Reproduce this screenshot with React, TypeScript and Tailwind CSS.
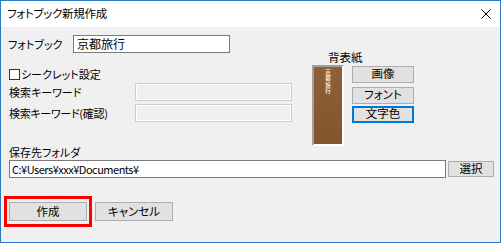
import React from 'react';

const jp = "[font-family:'Noto_Sans_CJK_JP','Noto_Sans',sans-serif] [font-feature-settings:'palt']";

function WinButton({ label, focused = false, className = '' }: { label: string; focused?: boolean; className?: string }) {
  return (
    <div
      className={`flex items-center justify-center bg-[#e1e1e1] border text-[11.5px] leading-none text-black ${
        focused ? 'border-[#0078d7] shadow-[inset_0_0_0_1px_#0078d7]' : 'border-[#adadad]'
      } ${className}`}
    >
      {label}
    </div>
  );
}

export default function App() {
  return (
    <div className={`w-[501px] h-[243px] border border-[#2b79c4] bg-[#f0f0f0] flex flex-col text-black ${jp}`}>
      {/* title bar */}
      <div className="h-[26px] bg-white flex items-center justify-between pl-[6px] pr-[9px]">
        <span className="text-[11.5px] leading-none tracking-[-0.3px]">フォトブック新規作成</span>
        <svg width="10" height="10" viewBox="0 0 10 10" fill="none">
          <path d="M0.5 0.5L9.5 9.5M9.5 0.5L0.5 9.5" stroke="#000" strokeWidth="1" />
        </svg>
      </div>

      {/* upper area */}
      <div className="h-[118px] flex">
        <div className="w-[291px] pl-[7px] pt-[8px] text-[11px] leading-none">
          <div className="flex items-center h-[18px]">
            <span className="w-[65px]">フォトブック</span>
            <div className="w-[157px] h-[18px] bg-white border border-[#7a7a7a] flex items-center pl-[3px] text-[12px]">
              京都旅行
            </div>
          </div>

          <div className="flex items-center h-[11px] mt-[16px]">
            <div className="w-[11px] h-[11px] ml-[1px] bg-white border border-[#333333]" />
            <span className="ml-[1px]">シークレット設定</span>
          </div>

          <div className="flex items-center h-[18px] mt-[3px]">
            <span className="w-[127px] pl-[1px]">検索キーワード</span>
            <div className="w-[157px] h-[18px] border border-[#cccccc] bg-[#f0f0f0] shadow-[inset_1px_1px_0_#ffffff,inset_-1px_-1px_0_#ffffff]" />
          </div>

          <div className="flex items-center h-[18px] mt-[3px]">
            <span className="w-[127px] pl-[1px] tracking-[-0.3px]">検索キーワード(確認)</span>
            <div className="w-[157px] h-[18px] border border-[#cccccc] bg-[#f0f0f0] shadow-[inset_1px_1px_0_#ffffff,inset_-1px_-1px_0_#ffffff]" />
          </div>
        </div>

        <div className="flex flex-col pl-[20px]">
          <span className="ml-[16px] mt-[25px] h-[14px] flex items-center text-[11.5px] leading-none">背表紙</span>
          <div className="flex mt-[1px]">
            {/* spine cover preview */}
            <div className="w-[32px] h-[81px] border-2 border-t-[#a0a0a0] border-l-[#a0a0a0] border-r-white border-b-white bg-[#8a5a2f] bg-[linear-gradient(180deg,rgba(255,255,255,0.04),rgba(0,0,0,0.06))] flex flex-col items-center pt-[2px] text-[5.5px] leading-[6.5px] font-bold text-[#f3e9dc]">
              <span>京</span>
              <span>都</span>
              <span>旅</span>
              <span>行</span>
            </div>
            <div className="flex flex-col ml-[8px] mt-[1px]">
              <WinButton label="画像" className="w-[62px] h-[17px]" />
              <WinButton label="フォント" className="w-[62px] h-[17px] mt-[4px]" />
              <WinButton label="文字色" focused className="w-[62px] h-[17px] mt-[2px]" />
            </div>
          </div>
        </div>
      </div>

      {/* save folder */}
      <div className="pl-[8px] text-[11px] leading-none">
        <span className="h-[14px] flex items-center">保存先フォルダ</span>
        <div className="flex items-center h-[18px] mt-[1px]">
          <div className="w-[437px] h-[18px] bg-white border border-[#7a7a7a] flex items-center pl-[2px] text-[11px] tracking-[-0.5px]">
            C:¥Users¥xxx¥Documents¥
          </div>
          <WinButton label="選択" className="w-[46px] h-[16px] ml-[2px]" />
        </div>
      </div>

      {/* action buttons */}
      <div className="flex items-center pl-[3px] mt-[18px]">
        <div className="w-[88px] h-[31px] border-[3px] border-[#ff0000] flex items-center justify-center">
          <WinButton label="作成" className="w-[78px] h-[19px]" />
        </div>
        <WinButton label="キャンセル" className="w-[78px] h-[19px] ml-[3px]" />
      </div>
    </div>
  );
}
